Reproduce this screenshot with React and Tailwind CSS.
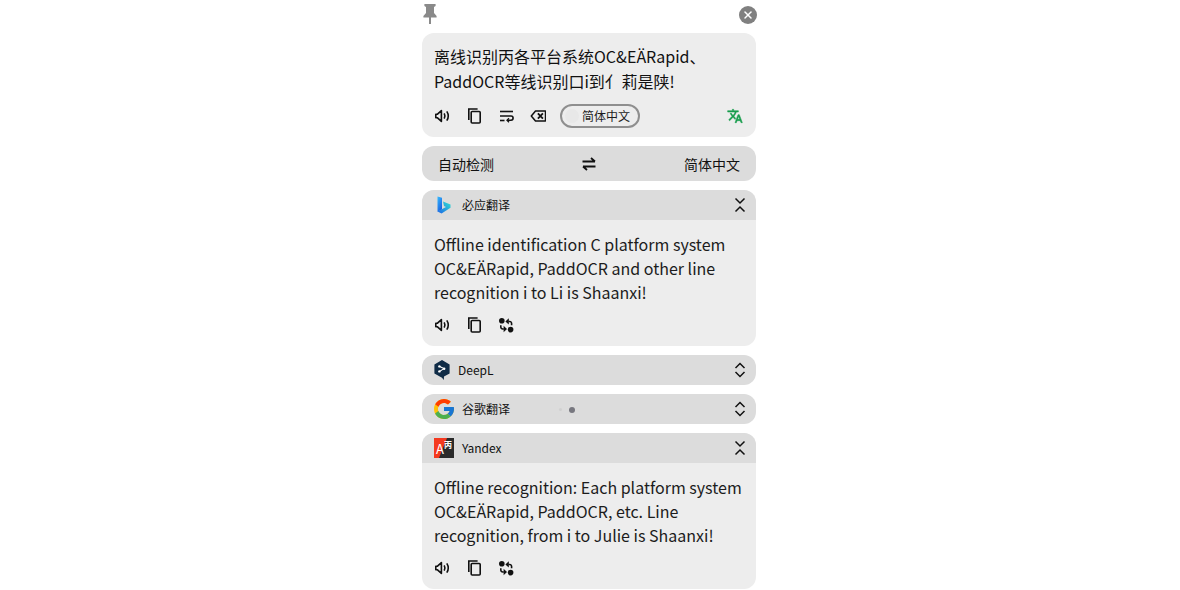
import { X } from "lucide-react";

const font = { fontFamily: '"Noto Sans CJK SC", "Noto Sans", sans-serif' };

function Speaker() {
  return (
    <svg width="16" height="16" viewBox="0 0 16 16" fill="none" stroke="#111" strokeWidth="1.6">
      <path d="M1.800 6.200h1.700l3.900-3.600v10.800L3.500 9.800H1.800z" strokeLinejoin="round" />
      <path d="M10.200 5.400c.9 1.600.9 3.600 0 5.200" />
      <path d="M12.800 3.400c1.800 2.800 1.800 6.400 0 9.200" />
    </svg>
  );
}

function Copy() {
  return (
    <svg width="16" height="16" viewBox="0 0 16 16" fill="none" stroke="#111" strokeWidth="1.6">
      <path d="M2.800 12V1h8.800" />
      <rect x="5.200" y="3.500" width="9" height="11.500" rx="1" />
    </svg>
  );
}

function WrapLines() {
  return (
    <svg width="16" height="16" viewBox="0 0 16 16" fill="none" stroke="#111" strokeWidth="1.6">
      <path d="M2 3.500h13" />
      <path d="M2 8h11a1.900 1.900 0 0 1 0 4.200H9.500" />
      <path d="M11 10.200 9 12.200l2 2" strokeWidth="1.300" />
      <path d="M2 12.500h4.500" />
    </svg>
  );
}

function Backspace() {
  return (
    <svg width="16" height="16" viewBox="0 0 16 16" fill="none" stroke="#111" strokeWidth="1.500">
      <path d="M5.500 3h10v10h-10L1.300 8z" strokeLinejoin="round" />
      <path d="m7.900 5.400 5 5.200M12.900 5.400l-5 5.200" strokeWidth="1.800" />
    </svg>
  );
}

function SwapDots() {
  return (
    <svg width="16" height="16" viewBox="0 0 16 16" fill="#111">
      <circle cx="3.800" cy="3.800" r="2.800" />
      <circle cx="12.600" cy="12.600" r="2.800" />
      <path d="M14.400 8.200h-1.600V6.400c0-.7-.5-1.200-1.200-1.200h-1V3.700h1c1.600 0 2.800 1.200 2.800 2.800z" />
      <path d="M10.800 1.200 7.400 4.400l3.400 3.200z" />
      <path d="M2 8.200h1.600V10c0 .7.500 1.200 1.200 1.200h1v1.500h-1C3.200 12.700 2 11.500 2 9.900z" />
      <path d="M5.600 15.200 9 12l-3.400-3.200z" />
    </svg>
  );
}

function Translate() {
  return (
    <svg width="16" height="16" viewBox="0 0 24 24" fill="#169c4c" stroke="#169c4c" strokeWidth="0.8">
      <path d="M12.870 15.070l-2.540-2.510.03-.03A17.520 17.520 0 0 0 14.070 6H17V4h-7V2H8v2H1v2h11.170C11.500 7.920 10.440 9.750 9 11.350 8.070 10.320 7.300 9.190 6.690 8h-2c.73 1.630 1.730 3.170 2.980 4.560l-5.090 5.020L4 19l5-5 3.110 3.110.76-2.040zM18.500 10h-2L12 22h2l1.120-3h4.750L21 22h2l-4.500-12zm-2.620 7l1.620-4.330L19.120 17h-3.240z" />
    </svg>
  );
}

function SwapArrows() {
  return (
    <svg width="16" height="16" viewBox="0 0 16 16" fill="none" stroke="#111" strokeWidth="1.800">
      <path d="M1.500 5.500h12.500M10 2 14 5.500" />
      <path d="M14.500 10.500H2M6 14 2 10.500" />
    </svg>
  );
}

function Chevrons({ open }) {
  return (
    <svg width="12" height="16" viewBox="0 0 12 16" fill="none" stroke="#111" strokeWidth="1.500">
      {open ? (
        <path d="M1.500 1.500 6 6l4.500-4.500M1.500 14.500 6 10l4.500 4.500" />
      ) : (
        <path d="M1.500 6 6 1.500 10.500 6M1.500 10 6 14.500 10.500 10" />
      )}
    </svg>
  );
}

function BingLogo() {
  return (
    <svg width="14" height="18" viewBox="0 0 14 18">
      <defs>
        <linearGradient id="bing-a" x1="0" y1="0" x2="0.6" y2="1">
          <stop offset="0" stopColor="#37bdff" />
          <stop offset="1" stopColor="#1a5fe0" />
        </linearGradient>
        <linearGradient id="bing-b" x1="0" y1="1" x2="1" y2="0">
          <stop offset="0" stopColor="#1b66e8" />
          <stop offset="1" stopColor="#34e0d0" />
        </linearGradient>
      </defs>
      <path d="M0.500 .4 5 1.800v11.600l-4.500 2.400z" fill="url(#bing-a)" />
      <path d="M6 5.600 13.500 8.600v3.200L4.600 17.400 0.500 15.600l8.500-4.600-2-1z" fill="url(#bing-b)" />
    </svg>
  );
}

function DeepLLogo() {
  return (
    <svg width="16" height="20" viewBox="0 0 16 20">
      <path d="M8 0 15.600 4.400v9L10 16.600 9.800 20 8 17.800 0.400 13.400v-9z" fill="#0f2b46" />
      <path d="M5.600 6.400 10 8.600 5.600 11.400" fill="none" stroke="#fff" strokeWidth="1.100" />
      <circle cx="5.400" cy="6.400" r="1.200" fill="#fff" />
      <circle cx="10.200" cy="8.800" r="1.200" fill="#fff" />
      <circle cx="5.400" cy="11.400" r="1.200" fill="#fff" />
    </svg>
  );
}

function GoogleLogo() {
  return (
    <svg width="20" height="20" viewBox="4 4 40 40">
      <path fill="#FFC107" d="M43.600 20.100H42V20H24v8h11.300C33.700 32.700 29.200 36 24 36c-6.600 0-12-5.400-12-12s5.400-12 12-12c3.100 0 5.800 1.200 8 3l5.700-5.700C34 6.100 29.300 4 24 4 13 4 4 13 4 24s9 20 20 20 20-9 20-20c0-1.300-.1-2.700-.4-3.900z" />
      <path fill="#FF3D00" d="m6.300 14.700 6.600 4.800C14.700 15.100 19 12 24 12c3.100 0 5.800 1.200 8 3l5.700-5.700C34 6.100 29.300 4 24 4 16.300 4 9.700 8.300 6.300 14.700z" />
      <path fill="#4CAF50" d="M24 44c5.200 0 9.900-2 13.400-5.200l-6.200-5.200C29.200 35.100 26.700 36 24 36c-5.200 0-9.600-3.300-11.300-7.900l-6.500 5C9.500 39.600 16.200 44 24 44z" />
      <path fill="#1976D2" d="M43.600 20.100H42V20H24v8h11.300c-.8 2.200-2.200 4.200-4.100 5.600l6.200 5.200C37 39.200 44 34 44 24c0-1.300-.1-2.700-.4-3.900z" />
    </svg>
  );
}

function YandexLogo() {
  return (
    <div className="relative w-5 h-5 shrink-0 bg-[#2b2b2b]">
      <svg className="absolute inset-0" width="20" height="20" viewBox="0 0 20 20">
        <path d="M0 0h13L5 20H0z" fill="#f4391f" />
      </svg>
      <span className="absolute left-[2px] top-[3px] text-[13px] leading-[16px] text-white">A</span>
      <span className="absolute left-[10px] top-[2px] text-[8px] leading-[10px] font-bold text-white">丙</span>
    </div>
  );
}

function Toolbar({ children }) {
  return <div className="flex items-center gap-4 h-6">{children}</div>;
}

function ResultCard({ logo, name, text, gap, indent }) {
  return (
    <div className="rounded-xl overflow-hidden bg-[#ededed]">
      <Header logo={logo} name={name} open gap={gap} indent={indent} />
      <div className="px-3 pt-3 pb-[9px]">
        <p className="text-base leading-6 text-[#1c1c1c] whitespace-nowrap">{text[0]}</p>
        <p className="text-base leading-6 text-[#1c1c1c] whitespace-nowrap">{text[1]}</p>
        <p className="text-base leading-6 text-[#1c1c1c] whitespace-nowrap">{text[2]}</p>
        <div className="mt-[9px]">
          <Toolbar>
            <Speaker />
            <Copy />
            <SwapDots />
          </Toolbar>
        </div>
      </div>
    </div>
  );
}

function Header({ logo, name, open, gap, indent = 0, children }) {
  return (
    <div className="h-[30px] flex items-center px-3 bg-[#dcdcdc]">
      <div className="flex items-center" style={{ gap, marginLeft: indent }}>
        {logo}
        <span className="text-xs text-[#111]">{name}</span>
      </div>
      {children}
      <div className="ml-auto mr-[-2px] flex">
        <Chevrons open={open} />
      </div>
    </div>
  );
}

export default function App() {
  return (
    <div className="w-full h-[590px] flex justify-center pr-[2px] bg-white overflow-hidden" style={font}>
      <div className="w-[334px] flex flex-col">
        <div className="h-[33px] flex items-center justify-between shrink-0">
          <svg className="mb-[5px]" width="16" height="20" viewBox="0 0 16 20" fill="#8a8a8a">
            <path d="M2.400 0h11.200v2l-1.600 1v6l2.600 3v1.400H9v6.600H7v-6.600H1.400V12L4 9V3L2.400 2z" />
          </svg>
          <div className="w-[18px] h-[18px] mr-[-1px] mb-[4px] rounded-full bg-[#808080] flex items-center justify-center">
            <X size={12} color="#fff" strokeWidth={3} />
          </div>
        </div>

        <div className="h-[104px] shrink-0 rounded-xl bg-[#ededed] px-3 pt-[11px]">
          <p className="text-base leading-[25px] text-[#111] whitespace-nowrap">离线识别丙各平台系统OC&amp;EÄRapid、</p>
          <p className="text-base leading-[25px] text-[#111] whitespace-nowrap">
            PaddOCR等线识别口i到亻 <span className="ml-[-3px]">莉是陕!</span>
          </p>
          <div className="mt-[10px] flex items-center">
            <Toolbar>
              <Speaker />
              <Copy />
              <WrapLines />
              <Backspace />
            </Toolbar>
            <div className="ml-[14px] w-[80px] h-6 rounded-full border-2 border-[#8f8f8f] flex items-center pl-[3px]">
              <div className="w-[14px] h-[14px] rounded-full bg-[#e8e8e8]" />
              <span className="ml-[3px] text-xs text-[#1c1c1c] whitespace-nowrap">简体中文</span>
            </div>
            <div className="ml-auto mr-[1px] flex">
              <Translate />
            </div>
          </div>
        </div>

        <div className="mt-[9px] h-[35px] shrink-0 rounded-xl bg-[#dcdcdc] px-4 flex items-center justify-between text-sm text-[#111]">
          <span>自动检测</span>
          <SwapArrows />
          <span>简体中文</span>
        </div>

        <div className="mt-[9px] flex flex-col gap-[9px]">
          <ResultCard
            logo={<BingLogo />}
            name="必应翻译"
            gap={11}
            indent={3}
            text={[
              "Offline identification C platform system",
              "OC&EÄRapid, PaddOCR and other line",
              "recognition i to Li is Shaanxi!",
            ]}
          />

          <div className="rounded-xl overflow-hidden">
            <Header logo={<DeepLLogo />} name="DeepL" gap={8} />
          </div>

          <div className="rounded-xl overflow-hidden">
            <Header logo={<GoogleLogo />} name="谷歌翻译" gap={8}>
              <div className="ml-[49px] mt-[1px] flex items-center gap-[7px]">
                <span className="w-[3px] h-[3px] rounded-full bg-[#d0d0d0]" />
                <span className="w-[6px] h-[6px] rounded-full bg-[#77777f]" />
              </div>
            </Header>
          </div>

          <ResultCard
            logo={<YandexLogo />}
            name="Yandex"
            gap={8}
            text={[
              "Offline recognition: Each platform system",
              "OC&EÄRapid, PaddOCR, etc. Line",
              "recognition, from i to Julie is Shaanxi!",
            ]}
          />
        </div>
      </div>
    </div>
  );
}
